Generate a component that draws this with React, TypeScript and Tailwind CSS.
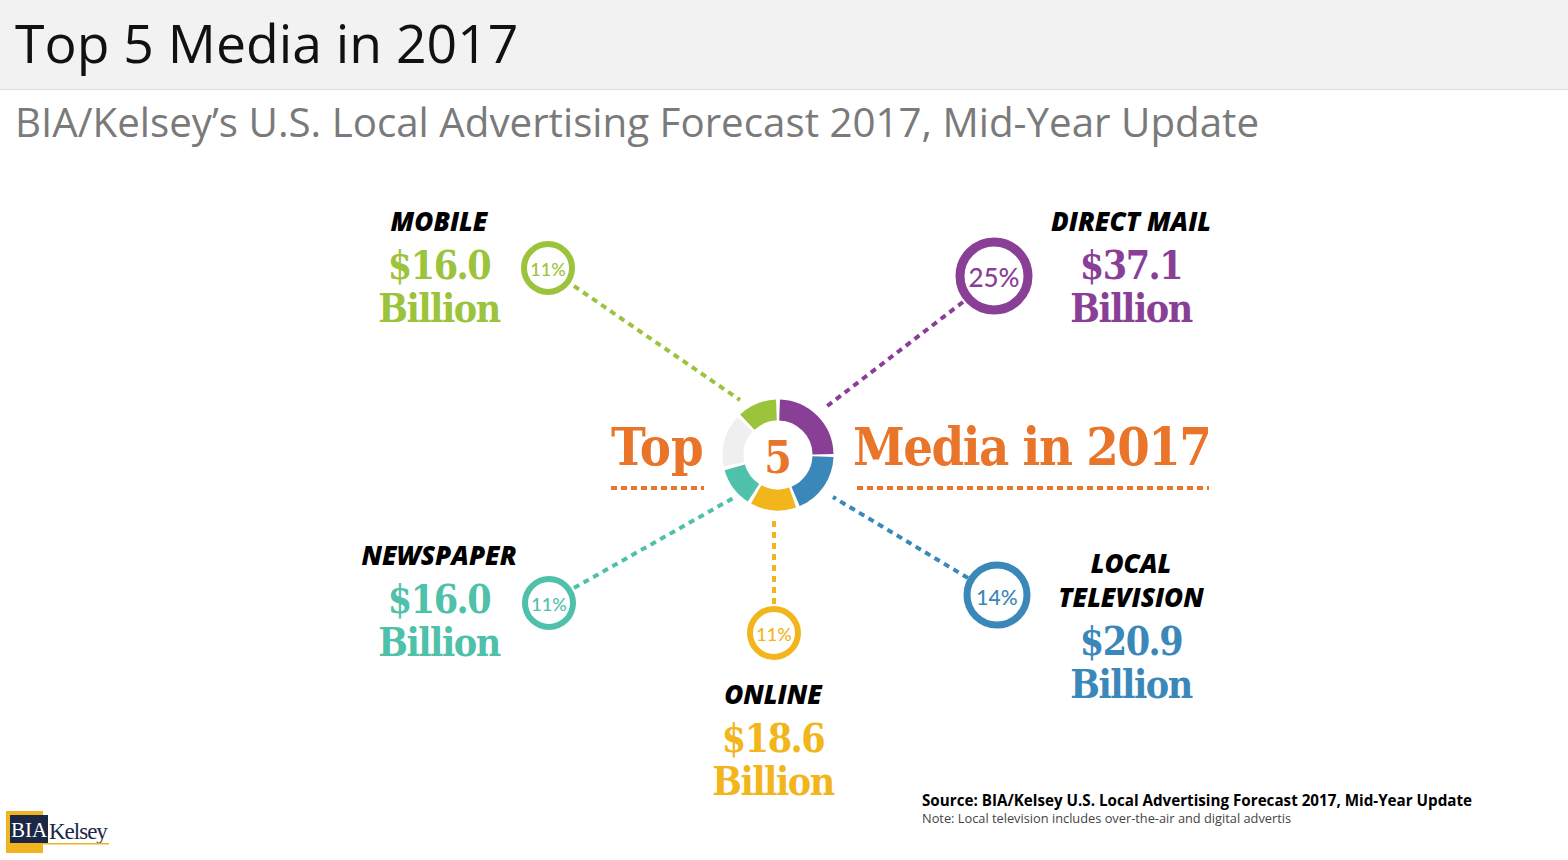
import React from 'react';

const COLORS = {
  green: '#9cc33c',
  purple: '#8a3f97',
  blue: '#3a87b9',
  yellow: '#f2b51b',
  teal: '#4fc0a9',
  orange: '#e8752a',
  gray: '#efefef',
};

// angles are clockwise from 12 o'clock
function arc(cx: number, cy: number, r: number, a0: number, a1: number) {
  const rad = (a: number) => ((a - 90) * Math.PI) / 180;
  const x0 = cx + r * Math.cos(rad(a0));
  const y0 = cy + r * Math.sin(rad(a0));
  const x1 = cx + r * Math.cos(rad(a1));
  const y1 = cy + r * Math.sin(rad(a1));
  const large = a1 - a0 > 180 ? 1 : 0;
  return `M${x0} ${y0} A${r} ${r} 0 ${large} 1 ${x1} ${y1}`;
}

const segments = [
  { a0: 2, a1: 89, color: COLORS.purple },
  { a0: 92, a1: 157, color: COLORS.blue },
  { a0: 161, a1: 209, color: COLORS.yellow },
  { a0: 213, a1: 254, color: COLORS.teal },
  { a0: 258, a1: 313, color: COLORS.gray },
  { a0: 317, a1: 358, color: COLORS.green },
];

const links = [
  { x1: 574, y1: 286, x2: 740, y2: 400, color: COLORS.green },
  { x1: 963, y1: 302, x2: 826, y2: 407, color: COLORS.purple },
  { x1: 574, y1: 588, x2: 735, y2: 497, color: COLORS.teal },
  { x1: 968, y1: 578, x2: 833, y2: 497, color: COLORS.blue },
  { x1: 774, y1: 521, x2: 774, y2: 604, color: COLORS.yellow },
];

const rings = [
  { cx: 548, cy: 268, r: 24, sw: 6, size: 18, text: '11%', color: COLORS.green },
  { cx: 994, cy: 276, r: 34, sw: 9, size: 26, text: '25%', color: COLORS.purple },
  { cx: 549, cy: 603, r: 24, sw: 6, size: 18, text: '11%', color: COLORS.teal },
  { cx: 997, cy: 595, r: 30, sw: 7, size: 21, text: '14%', color: COLORS.blue },
  { cx: 774, cy: 633, r: 24, sw: 6, size: 18, text: '11%', color: COLORS.yellow },
];

function Stat({ pos, label, value, color }: { pos: string; label: string[]; value: string; color: string }) {
  return (
    <div className={`absolute w-[300px] -translate-x-1/2 text-center ${pos}`}>
      {label.map((l) => (
        <div key={l} className="font-['Open_Sans',sans-serif] text-[26px] leading-[34px] font-extrabold italic text-black">
          {l}
        </div>
      ))}
      <div className={`mt-[6px] font-['DejaVu_Serif_Condensed','DejaVu_Serif',serif] text-[39px] leading-[43px] font-bold tracking-[-1.5px] ${color}`}>
        {value}
        <br />
        Billion
      </div>
    </div>
  );
}

function Logo() {
  return (
    <svg width="112" height="46" viewBox="0 0 112 46">
      <rect x="0" y="0" width="37" height="42" fill="#f1b421" />
      <rect x="4" y="4" width="38" height="28" fill="#1b2746" />
      <text x="23" y="26" textAnchor="middle" fontFamily="'Liberation Serif', serif" fontSize="21" fill="#fff">
        BIA
      </text>
      <text x="43" y="28" fontFamily="'Liberation Serif', serif" fontSize="23" fill="#1b2746" letterSpacing="-1">
        Kelsey
      </text>
      <rect x="9" y="32" width="94" height="1.5" fill="#f1b421" />
    </svg>
  );
}

export default function App() {
  return (
    <div className="w-[1568px] h-[860px] overflow-hidden bg-white">
      <header className="h-[90px] bg-[#f2f2f2] border-b border-[#dcdcdc]">
        <h1 className="pl-[15px] font-['Open_Sans',sans-serif] text-[53.5px] leading-[85px] text-[#111]">Top 5 Media in 2017</h1>
      </header>
      <div className="h-[60px] pt-[4px] pl-[15px] font-['Open_Sans',sans-serif] text-[40.3px] leading-[56px] text-[#7a7a7a]">
        BIA/Kelsey’s U.S. Local Advertising Forecast 2017, Mid-Year Update
      </div>

      <div className="relative h-[640px]">
        <svg className="absolute inset-0" width="1568" height="640" viewBox="0 150 1568 640">
          {links.map((l, i) => (
            <line
              key={i}
              x1={l.x1}
              y1={l.y1}
              x2={l.x2}
              y2={l.y2}
              stroke={l.color}
              strokeWidth="4"
              strokeDasharray="6 5"
            />
          ))}
          {segments.map((s, i) => (
            <path key={i} d={arc(778, 455, 45, s.a0, s.a1)} fill="none" stroke={s.color} strokeWidth="21" />
          ))}
          <text
            x="778"
            y="457"
            textAnchor="middle"
            dominantBaseline="central"
            fontFamily="'DejaVu Serif Condensed', 'DejaVu Serif', serif"
            fontWeight="700"
            fontSize="44"
            fill={COLORS.orange}
          >
            5
          </text>
          <line x1="611" y1="488" x2="704" y2="488" stroke={COLORS.orange} strokeWidth="4" strokeDasharray="6 4" />
          <line x1="857" y1="488" x2="1209" y2="488" stroke={COLORS.orange} strokeWidth="4" strokeDasharray="6 4" />
          {rings.map((r, i) => (
            <g key={i}>
              <circle cx={r.cx} cy={r.cy} r={r.r} fill="#fff" stroke={r.color} strokeWidth={r.sw} />
              <text
                x={r.cx}
                y={r.cy + 1}
                textAnchor="middle"
                dominantBaseline="central"
                fontFamily="Lato, sans-serif"
                fontWeight="500"
                fontSize={r.size}
                fill={r.color}
              >
                {r.text}
              </text>
            </g>
          ))}
        </svg>

        <div className="absolute left-[611px] top-[267px] font-['DejaVu_Serif_Condensed','DejaVu_Serif',serif] text-[52px] leading-[60px] font-bold text-[#e8752a]">
          Top
        </div>
        <div className="absolute left-[853px] top-[267px] font-['DejaVu_Serif_Condensed','DejaVu_Serif',serif] text-[52px] leading-[60px] font-bold tracking-[-1.5px] text-[#e8752a]">
          Media in 2017
        </div>

        <Stat pos="left-[439px] top-[54px]" label={['MOBILE']} value="$16.0" color="text-[#9cc33c]" />
        <Stat pos="left-[1131px] top-[54px]" label={['DIRECT MAIL']} value="$37.1" color="text-[#8a3f97]" />
        <Stat pos="left-[439px] top-[388px]" label={['NEWSPAPER']} value="$16.0" color="text-[#4fc0a9]" />
        <Stat pos="left-[1131px] top-[396px]" label={['LOCAL', 'TELEVISION']} value="$20.9" color="text-[#3a87b9]" />
        <Stat pos="left-[773px] top-[527px]" label={['ONLINE']} value="$18.6" color="text-[#f2b51b]" />
      </div>

      <footer className="flex h-[70px] items-start">
        <div className="ml-[6px] mt-[21px]">
          <Logo />
        </div>
        <div className="ml-[804px] font-['Open_Sans',sans-serif]">
          <div className="text-[15.2px] leading-[20px] font-bold text-black">
            Source: BIA/Kelsey U.S. Local Advertising Forecast 2017, Mid-Year Update
          </div>
          <div className="text-[12.8px] leading-[16px] text-[#444]">
            Note: Local television includes over-the-air and digital advertis
          </div>
        </div>
      </footer>
    </div>
  );
}
